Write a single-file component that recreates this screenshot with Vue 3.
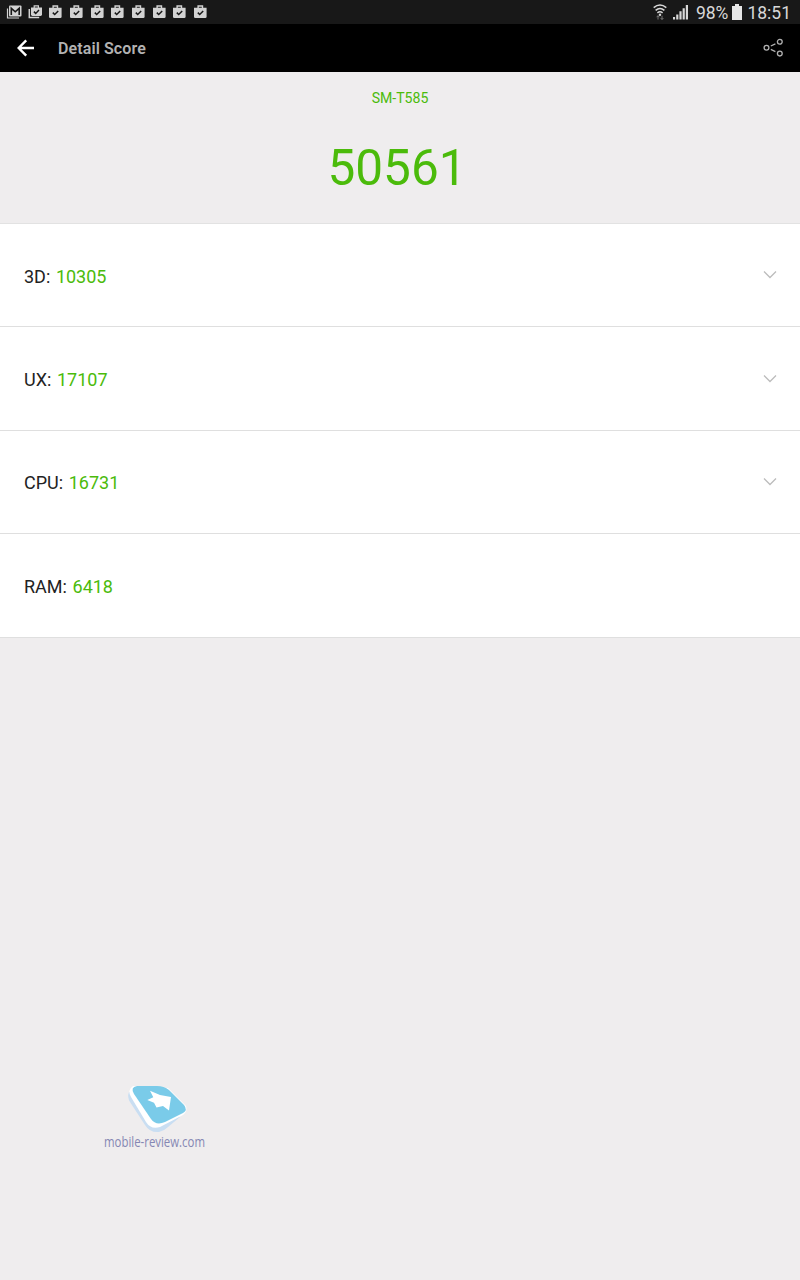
<script setup>
import { ref } from 'vue'

const bags = 8
const rows = ref([
  { label: '3D:', value: 10305, expandable: true },
  { label: 'UX:', value: 17107, expandable: true },
  { label: 'CPU:', value: 16731, expandable: true },
  { label: 'RAM:', value: 6418, expandable: false },
])
</script>

<template>
  <div class="screen">
    <div class="status">
      <div class="notifications">
        <svg class="note" viewBox="0 0 16 16">
          <path d="M1.5 4.5V14H13" fill="none" stroke="#d2d2d2" stroke-width="1.2" />
          <rect x="3" y="1.5" width="12.5" height="11" rx="1" fill="#d2d2d2" />
          <path d="M5.3 11V4.3L9.25 7.8L13.2 4.3V11" fill="none" stroke="#181818" stroke-width="1.6" />
        </svg>
        <svg class="note" viewBox="0 0 16 16">
          <path d="M2.3 5V13.5H12.2" fill="none" stroke="#d2d2d2" stroke-width="1.5" />
          <path d="M7.2 4V1.8H11.4V4" fill="none" stroke="#d2d2d2" stroke-width="1.2" />
          <path d="M4 3.5H15V10.5Q15 11.9 13.6 11.9H5.4Q4 11.9 4 10.5Z" fill="#d2d2d2" />
          <path d="M6.9 7.6L8.7 9.4L12 6" fill="none" stroke="#181818" stroke-width="1.5" />
        </svg>
        <svg v-for="n in bags" :key="n" class="note" viewBox="0 0 16 16">
          <path d="M6.1 4.5V2H10.5V4.5" fill="none" stroke="#d2d2d2" stroke-width="1.4" />
          <path d="M2 3.8H14.6V12.7Q14.6 14 13.3 14H3.3Q2 14 2 12.7Z" fill="#d2d2d2" />
          <path d="M5.8 8.6L7.7 10.5L11.2 6.9" fill="none" stroke="#181818" stroke-width="1.5" />
        </svg>
      </div>
      <div class="system">
        <svg class="wifi" viewBox="0 0 14 18">
          <g fill="none" stroke="#d8d8d8" stroke-width="1.5">
            <path d="M.7 4.6Q7 -.7 13.3 4.6" />
            <path d="M2.6 7.4Q7 3.7 11.4 7.4" />
            <path d="M4.4 9.9Q7 7.8 9.6 9.9" />
          </g>
          <circle cx="7" cy="11.7" r="1.2" fill="#d8d8d8" />
          <path d="M5 12.7V16.5M3.6 14.2L5 12.7L6.4 14.2M9 12.7V16.5M7.6 15L9 16.5L10.4 15" fill="none" stroke="#777" stroke-width="1" />
        </svg>
        <svg class="signal" viewBox="0 0 16 16">
          <path d="M0 13H2.1V15.5H0ZM3.2 10.5H5.4V15.5H3.2ZM6.4 7.3H8.6V15.5H6.4ZM9.6 4.3H11.8V15.5H9.6ZM12.8 1H15V15.5H12.8Z" fill="#d8d8d8" />
        </svg>
        <span class="percent">98%</span>
        <svg class="battery" viewBox="0 0 10 16">
          <path d="M3 0H7V2H10V16H0V2H3Z" fill="#e6e6e6" />
        </svg>
        <span class="clock">18:51</span>
      </div>
    </div>

    <header class="bar">
      <svg class="back" viewBox="0 0 18 18">
        <path d="M9.2 1.3L1.7 9L9.2 16.7M2 9H17" fill="none" stroke="#fff" stroke-width="2.4" />
      </svg>
      <h1>Detail Score</h1>
      <svg class="share" viewBox="0 0 22 20">
        <g fill="none" stroke="#b0b0b0" stroke-width="1.3">
          <circle cx="4.5" cy="9.7" r="2.4" />
          <circle cx="17.8" cy="3.8" r="2.4" />
          <circle cx="17.8" cy="15.6" r="2.4" />
          <path d="M8.8 8L13.4 5.8M8.8 11.4L13.4 13.6" />
        </g>
      </svg>
    </header>

    <section class="summary">
      <div class="model">SM-T585</div>
      <div class="total">50561</div>
    </section>

    <ul class="scores">
      <li v-for="row in rows" :key="row.label">
        <span class="label">{{ row.label }}</span>
        <span class="value">{{ row.value }}</span>
        <svg v-if="row.expandable" class="chevron" viewBox="0 0 14 8">
          <path d="M1 .5L7 6.5L13 .5" fill="none" stroke="#bcbcbc" stroke-width="1.3" />
        </svg>
      </li>
    </ul>

    <svg class="watermark" viewBox="0 0 140 80">
      <path d="M29 13Q27 18 30 23L45 46Q50 54 59 53Q64 52 68 48L80 38L50 20Z" fill="#c9def2" />
      <path d="M33 7Q27 11 31 18L46 43Q51 51 60 48L83 36Q88 32 86 27L68 9Z" fill="#fff" />
      <path d="M37 7H57Q64 7 69 11L84 26Q88 31 83 34L65 43Q56 47 51 40L34 15Q30 8 37 7Z" fill="#7acbe9" />
      <path d="M50 11.7L60 16L71 18L69 31.5L63 27L56.5 28.5L54 23.7L47.3 21L53.3 18.3Z" fill="#fff" />
      <text x="4" y="68" textLength="101" lengthAdjust="spacingAndGlyphs">mobile-review.com</text>
    </svg>
  </div>
</template>

<style>
html,
body {
  margin: 0;
  background: #efedee;
}
</style>

<style scoped>
.screen {
  width: 800px;
  height: 1280px;
  overflow: hidden;
  background: #efedee;
  font-family: Roboto, "Liberation Sans", sans-serif;
}
.status {
  display: flex;
  justify-content: space-between;
  height: 24px;
  background: #181818;
}
.notifications {
  display: flex;
  align-items: center;
  gap: 4.67px;
  padding-left: 6px;
}
.note {
  width: 16px;
  height: 16px;
}
.system {
  display: flex;
  align-items: center;
  padding-right: 9px;
  color: #d8d8d8;
  font-size: 17.5px;
}
.wifi {
  width: 14px;
  height: 18px;
  margin-right: 6px;
}
.signal {
  width: 16px;
  height: 16px;
  margin-right: 7px;
}
.battery {
  width: 10px;
  height: 16px;
  margin: 0 5px 0 4px;
}
.percent,
.clock {
  line-height: 24px;
  padding-top: 2px;
}
.bar {
  display: flex;
  align-items: center;
  box-sizing: border-box;
  height: 48px;
  padding: 0 16px 0 17px;
  background: #000;
}
.back {
  width: 18px;
  height: 18px;
}
h1 {
  flex: 1;
  margin: 0 0 0 23px;
  padding-top: 2px;
  color: #b2b2b2;
  font-size: 16px;
  font-weight: 600;
  letter-spacing: 0.1px;
  line-height: 24px;
}
.share {
  width: 22px;
  height: 20px;
}
.summary {
  box-sizing: border-box;
  height: 152px;
  padding-top: 17px;
  border-bottom: 1px solid #e2e2e2;
  color: #4bbb0b;
  text-align: center;
}
.model {
  font-size: 14.1px;
  line-height: 18px;
}
.total {
  margin-top: 31px;
  padding-right: 6px;
  font-size: 49.5px;
  line-height: 60px;
}
.scores {
  margin: 0;
  padding: 0;
  list-style: none;
  background: #fff;
}
.scores li {
  display: flex;
  align-items: center;
  gap: 5.6px;
  box-sizing: border-box;
  height: 103.4px;
  padding: 0 23px 0 24px;
  border-bottom: 1px solid #dfdfdf;
  font-size: 18px;
}
.label,
.value {
  padding-top: 2px;
}
.label {
  color: #222;
}
.value {
  color: #4bbb0b;
}
.chevron {
  width: 14px;
  height: 8px;
  margin-left: auto;
}
.watermark {
  display: block;
  width: 140px;
  height: 80px;
  margin: 441.4px 0 0 100px;
}
.watermark text {
  fill: #8587b3;
  font: 14.5px "Open Sans", sans-serif;
}
</style>
